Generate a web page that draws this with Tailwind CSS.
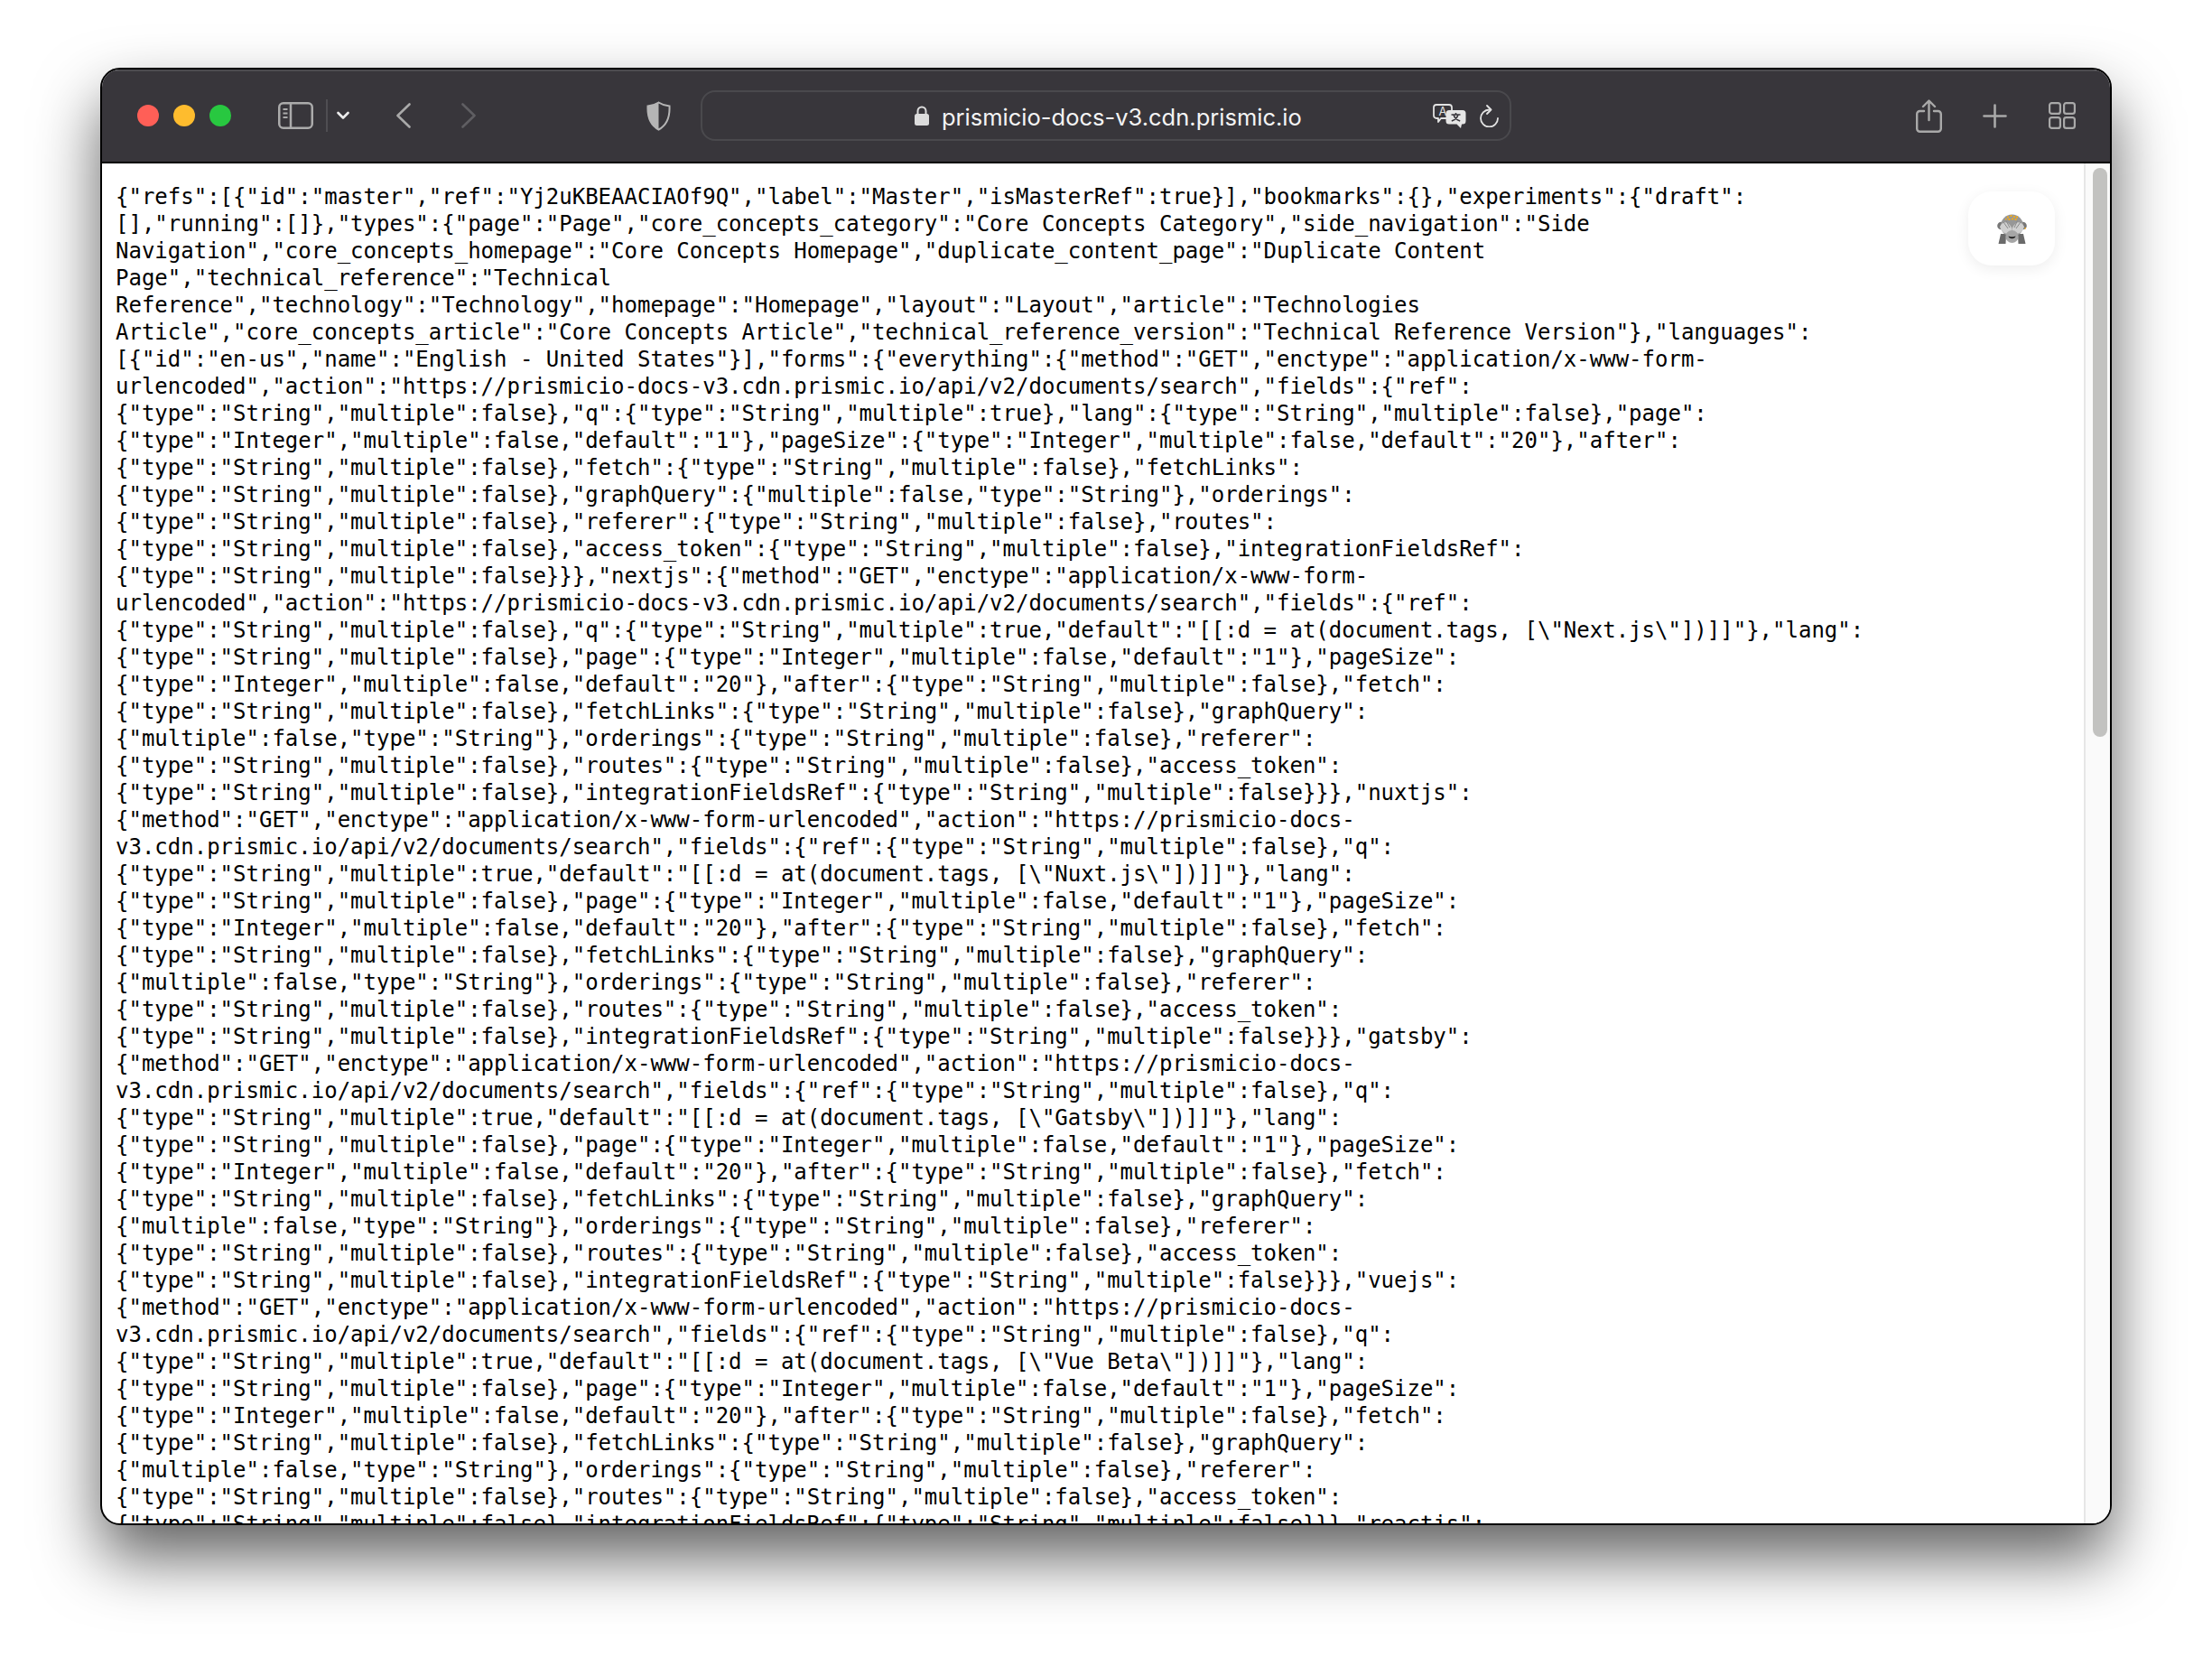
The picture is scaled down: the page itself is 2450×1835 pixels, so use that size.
<!doctype html>
<html lang="en">
  <head>
    <meta charset="utf-8" />
    <title>prismicio-docs-v3.cdn.prismic.io</title>
    <script src="https://cdn.jsdelivr.net/npm/@tailwindcss/browser@4"></script>
  </head>

  <body class="bg-white min-h-screen overflow-hidden pt-[75px] pl-[111px]">
    <!-- Browser window -->
    <div class="w-[2228px] h-[1614px] flex flex-col rounded-[22px] border-2 border-black overflow-hidden bg-white shadow-[0_36px_70px_rgba(0,0,0,0.62)]">
      <!-- Toolbar -->
      <div class="h-[104px] shrink-0 flex items-center pl-[39px] pb-[2px] bg-[#38363b] border-b-2 border-black border-t-2 border-t-[#4c4b4f]">
        <div class="flex items-center gap-4">
          <span class="w-6 h-6 rounded-full bg-[#ff5f57]"></span>
          <span class="w-6 h-6 rounded-full bg-[#febc2e]"></span>
          <span class="w-6 h-6 rounded-full bg-[#28c840]"></span>
        </div>

        <!-- Sidebar toggle -->
        <svg class="ml-[52px] w-[39px] h-[30px] shrink-0" viewBox="0 0 39 30" fill="none" stroke="#ababab">
          <rect x="1.25" y="1.25" width="36.5" height="27.5" rx="4.5" stroke-width="2.5" />
          <path d="M14 1.5V28.5" stroke-width="2.5" />
          <path d="M5.5 8H10.5M5.5 12.5H10.5M5.5 17H10.5" stroke-width="2" />
        </svg>
        <span class="ml-[14px] w-[2px] h-9 bg-[#4f4e52] shrink-0"></span>
        <svg class="ml-[10px] w-[14px] h-[10px] shrink-0" viewBox="0 0 14 10" fill="none" stroke="#ececec" stroke-width="2.6" stroke-linecap="round" stroke-linejoin="round">
          <path d="M1.5 2L7 7.5L12.5 2" />
        </svg>

        <!-- Back / forward -->
        <svg class="ml-[52px] w-4 h-7 shrink-0" viewBox="0 0 16 28" fill="none" stroke="#a9a9a9" stroke-width="2.6" stroke-linecap="round" stroke-linejoin="round">
          <path d="M14.5 1.5L1.5 14L14.5 26.5" />
        </svg>
        <svg class="ml-14 w-4 h-7 shrink-0" viewBox="0 0 16 28" fill="none" stroke="#5f5e62" stroke-width="2.6" stroke-linecap="round" stroke-linejoin="round">
          <path d="M1.5 1.5L14.5 14L1.5 26.5" />
        </svg>

        <!-- Privacy shield -->
        <svg class="ml-[189px] w-[27px] h-[33px] shrink-0" viewBox="0 0 27 33">
          <path d="M13.5 1.5C17 3.8 21 5 25.5 5.5C26 16 23.5 26 13.5 31.5C3.5 26 1 16 1.5 5.5C6 5 10 3.8 13.5 1.5Z" fill="none" stroke="#b5b5b5" stroke-width="2" />
          <path d="M13.5 1.5V31.5C3.5 26 1 16 1.5 5.5C6 5 10 3.8 13.5 1.5Z" fill="#b5b5b5" />
        </svg>

        <!-- Address bar -->
        <div class="ml-[33px] w-[898px] h-14 shrink-0 flex items-center pl-[235px] pr-3 rounded-2xl border-2 border-[#4a494d]">
          <svg class="w-4 h-[22px] shrink-0" viewBox="0 0 16 22">
            <path d="M3.5 10V6A4.5 4.5 0 0 1 12.5 6V10" fill="none" stroke="#dcdcdc" stroke-width="2" />
            <rect x="0" y="9" width="16" height="13" rx="2.5" fill="#dcdcdc" />
          </svg>
          <span class="ml-[14px] pt-[3px] font-['Inter',sans-serif] text-[25.5px] leading-none text-[#f4f4f4] whitespace-nowrap">prismicio-docs-v3.cdn.prismic.io</span>
          <svg class="ml-auto w-[37px] h-[27px] shrink-0" viewBox="0 0 37 27">
            <path d="M4 1H18A3 3 0 0 1 21 4V13A3 3 0 0 1 18 16H9L6 20V16H4A3 3 0 0 1 1 13V4A3 3 0 0 1 4 1Z" fill="#38363b" stroke="#e2e2e2" stroke-width="1.8" stroke-linejoin="round" />
            <text x="11" y="13" text-anchor="middle" font-family="Inter, sans-serif" font-size="13" fill="#e2e2e2">A</text>
            <path d="M18 7H33A3.5 3.5 0 0 1 36.5 10.5V19A3.5 3.5 0 0 1 33 22.5H32L31 27L26.5 22.5H18A3.5 3.5 0 0 1 14.500 19V10.500A3.500 3.500 0 0 1 18 7Z" fill="#e6e6e6" />
            <path d="M20.500 12H30.500M25.500 10V12M28 12C27 15.500 24 18 20.800 19M23 12C24 15.500 27 18 30.200 19" fill="none" stroke="#38363b" stroke-width="1.6" />
          </svg>
          <svg class="ml-[15px] w-[21px] h-[25px] shrink-0" viewBox="0 0 21 25" fill="none" stroke="#e2e2e2" stroke-width="1.8" stroke-linecap="round" stroke-linejoin="round">
            <path d="M10.500 5.500A9.500 9.500 0 1 0 20 15" />
            <path d="M8 1L12.500 5.500L8 10" />
          </svg>
        </div>

        <!-- Right actions -->
        <svg class="ml-[448px] w-[29px] h-[37px] shrink-0" viewBox="0 0 29 37" fill="none" stroke="#a9a9a9" stroke-width="2.4" stroke-linecap="round" stroke-linejoin="round">
          <path d="M9 13H4.500A3.300 3.300 0 0 0 1.200 16.300V32.500A3.300 3.300 0 0 0 4.500 35.800H24.500A3.300 3.300 0 0 0 27.800 32.500V16.300A3.300 3.300 0 0 0 24.500 13H20" />
          <path d="M14.500 23V1.800M8 8L14.500 1.500L21 8" />
        </svg>
        <svg class="ml-[45px] w-[27px] h-[27px] shrink-0" viewBox="0 0 27 27" fill="none" stroke="#a9a9a9" stroke-width="2.6" stroke-linecap="round">
          <path d="M13.500 1.500V25.500M1.500 13.500H25.500" />
        </svg>
        <svg class="ml-[46px] w-[30px] h-[30px] shrink-0" viewBox="0 0 30 30" fill="none" stroke="#a9a9a9" stroke-width="2.2">
          <rect x="1.100" y="1.100" width="11.800" height="11.800" rx="2.500" />
          <rect x="17.100" y="1.100" width="11.800" height="11.800" rx="2.500" />
          <rect x="1.100" y="17.100" width="11.800" height="11.800" rx="2.500" />
          <rect x="17.100" y="17.100" width="11.800" height="11.800" rx="2.500" />
        </svg>
      </div>

      <!-- Page -->
      <div class="relative flex-1 flex overflow-hidden">
        <pre class="flex-1 overflow-hidden pt-[22px] pl-[15px] font-['DejaVu_Sans_Mono',monospace] text-[24px] leading-[30px] text-black">{"refs":[{"id":"master","ref":"Yj2uKBEAACIAOf9Q","label":"Master","isMasterRef":true}],"bookmarks":{},"experiments":{"draft":
[],"running":[]},"types":{"page":"Page","core_concepts_category":"Core Concepts Category","side_navigation":"Side
Navigation","core_concepts_homepage":"Core Concepts Homepage","duplicate_content_page":"Duplicate Content
Page","technical_reference":"Technical
Reference","technology":"Technology","homepage":"Homepage","layout":"Layout","article":"Technologies
Article","core_concepts_article":"Core Concepts Article","technical_reference_version":"Technical Reference Version"},"languages":
[{"id":"en-us","name":"English - United States"}],"forms":{"everything":{"method":"GET","enctype":"application/x-www-form-
urlencoded","action":"https://prismicio-docs-v3.cdn.prismic.io/api/v2/documents/search","fields":{"ref":
{"type":"String","multiple":false},"q":{"type":"String","multiple":true},"lang":{"type":"String","multiple":false},"page":
{"type":"Integer","multiple":false,"default":"1"},"pageSize":{"type":"Integer","multiple":false,"default":"20"},"after":
{"type":"String","multiple":false},"fetch":{"type":"String","multiple":false},"fetchLinks":
{"type":"String","multiple":false},"graphQuery":{"multiple":false,"type":"String"},"orderings":
{"type":"String","multiple":false},"referer":{"type":"String","multiple":false},"routes":
{"type":"String","multiple":false},"access_token":{"type":"String","multiple":false},"integrationFieldsRef":
{"type":"String","multiple":false}}},"nextjs":{"method":"GET","enctype":"application/x-www-form-
urlencoded","action":"https://prismicio-docs-v3.cdn.prismic.io/api/v2/documents/search","fields":{"ref":
{"type":"String","multiple":false},"q":{"type":"String","multiple":true,"default":"[[:d = at(document.tags, [\"Next.js\"])]]"},"lang":
{"type":"String","multiple":false},"page":{"type":"Integer","multiple":false,"default":"1"},"pageSize":
{"type":"Integer","multiple":false,"default":"20"},"after":{"type":"String","multiple":false},"fetch":
{"type":"String","multiple":false},"fetchLinks":{"type":"String","multiple":false},"graphQuery":
{"multiple":false,"type":"String"},"orderings":{"type":"String","multiple":false},"referer":
{"type":"String","multiple":false},"routes":{"type":"String","multiple":false},"access_token":
{"type":"String","multiple":false},"integrationFieldsRef":{"type":"String","multiple":false}}},"nuxtjs":
{"method":"GET","enctype":"application/x-www-form-urlencoded","action":"https://prismicio-docs-
v3.cdn.prismic.io/api/v2/documents/search","fields":{"ref":{"type":"String","multiple":false},"q":
{"type":"String","multiple":true,"default":"[[:d = at(document.tags, [\"Nuxt.js\"])]]"},"lang":
{"type":"String","multiple":false},"page":{"type":"Integer","multiple":false,"default":"1"},"pageSize":
{"type":"Integer","multiple":false,"default":"20"},"after":{"type":"String","multiple":false},"fetch":
{"type":"String","multiple":false},"fetchLinks":{"type":"String","multiple":false},"graphQuery":
{"multiple":false,"type":"String"},"orderings":{"type":"String","multiple":false},"referer":
{"type":"String","multiple":false},"routes":{"type":"String","multiple":false},"access_token":
{"type":"String","multiple":false},"integrationFieldsRef":{"type":"String","multiple":false}}},"gatsby":
{"method":"GET","enctype":"application/x-www-form-urlencoded","action":"https://prismicio-docs-
v3.cdn.prismic.io/api/v2/documents/search","fields":{"ref":{"type":"String","multiple":false},"q":
{"type":"String","multiple":true,"default":"[[:d = at(document.tags, [\"Gatsby\"])]]"},"lang":
{"type":"String","multiple":false},"page":{"type":"Integer","multiple":false,"default":"1"},"pageSize":
{"type":"Integer","multiple":false,"default":"20"},"after":{"type":"String","multiple":false},"fetch":
{"type":"String","multiple":false},"fetchLinks":{"type":"String","multiple":false},"graphQuery":
{"multiple":false,"type":"String"},"orderings":{"type":"String","multiple":false},"referer":
{"type":"String","multiple":false},"routes":{"type":"String","multiple":false},"access_token":
{"type":"String","multiple":false},"integrationFieldsRef":{"type":"String","multiple":false}}},"vuejs":
{"method":"GET","enctype":"application/x-www-form-urlencoded","action":"https://prismicio-docs-
v3.cdn.prismic.io/api/v2/documents/search","fields":{"ref":{"type":"String","multiple":false},"q":
{"type":"String","multiple":true,"default":"[[:d = at(document.tags, [\"Vue Beta\"])]]"},"lang":
{"type":"String","multiple":false},"page":{"type":"Integer","multiple":false,"default":"1"},"pageSize":
{"type":"Integer","multiple":false,"default":"20"},"after":{"type":"String","multiple":false},"fetch":
{"type":"String","multiple":false},"fetchLinks":{"type":"String","multiple":false},"graphQuery":
{"multiple":false,"type":"String"},"orderings":{"type":"String","multiple":false},"referer":
{"type":"String","multiple":false},"routes":{"type":"String","multiple":false},"access_token":
{"type":"String","multiple":false},"integrationFieldsRef":{"type":"String","multiple":false}}},"reactjs":</pre>

        <!-- Scrollbar -->
        <div class="w-[29px] shrink-0 border-l-2 border-[#e6e6e6] bg-[#fafafa] pl-2 pt-[5px]">
          <div class="w-4 h-[630px] rounded-full bg-[#c2c2c0]"></div>
        </div>

        <!-- Floating extension button -->
        <div class="absolute top-[31px] left-[2067px] w-24 h-[82px] flex items-center justify-center rounded-[26px] bg-white shadow-[0_4px_16px_rgba(0,0,0,0.07)]">
          <svg class="w-[33px] h-[33px]" viewBox="0 0 33 33">
            <path d="M1.500 33L4 22H10L9.500 33ZM31.500 33L29 22H23L23.500 33Z" fill="#6a6a6a" />
            <circle cx="4.500" cy="13" r="4.300" fill="#777777" />
            <circle cx="28.500" cy="13" r="4.300" fill="#777777" />
            <ellipse cx="16.500" cy="13" rx="12.500" ry="12.500" fill="#979797" />
            <path d="M3 14C6 8 12 7 16 15C17 18 16 20 14 21C10 23 5 21 3 14Z" fill="#cfcfcf" />
            <path d="M30 14C27 8 21 7 17 15C16 18 17 20 19 21C23 23 28 21 30 14Z" fill="#cfcfcf" />
            <path d="M7 9L12 16M10 7.500L14 15M22.500 7.500L19 15M26 9L21 16" stroke="#8a8a8a" stroke-width="1" />
            <ellipse cx="16.500" cy="25" rx="7" ry="7" fill="#a6a6a6" />
            <path d="M12.500 24.500C14 25.500 19 25.500 20.500 24.500C20 28 13 28 12.500 24.500Z" fill="#1f1f1f" />
            <path d="M11 2.500H13V4.500H11ZM14.500 1H16.500V3H14.500ZM18 2H20V4H18ZM12.500 5H14.500V7H12.500ZM16 4.500H18V6.500H16ZM19.500 5H21.500V7H19.500ZM21 2.500H23V4.500H21ZM9 5H10.500V6.500H9ZM30.500 15H32V16.500H30.500Z" fill="#f2ab1b" />
          </svg>
        </div>
      </div>
    </div>
  </body>
</html>
